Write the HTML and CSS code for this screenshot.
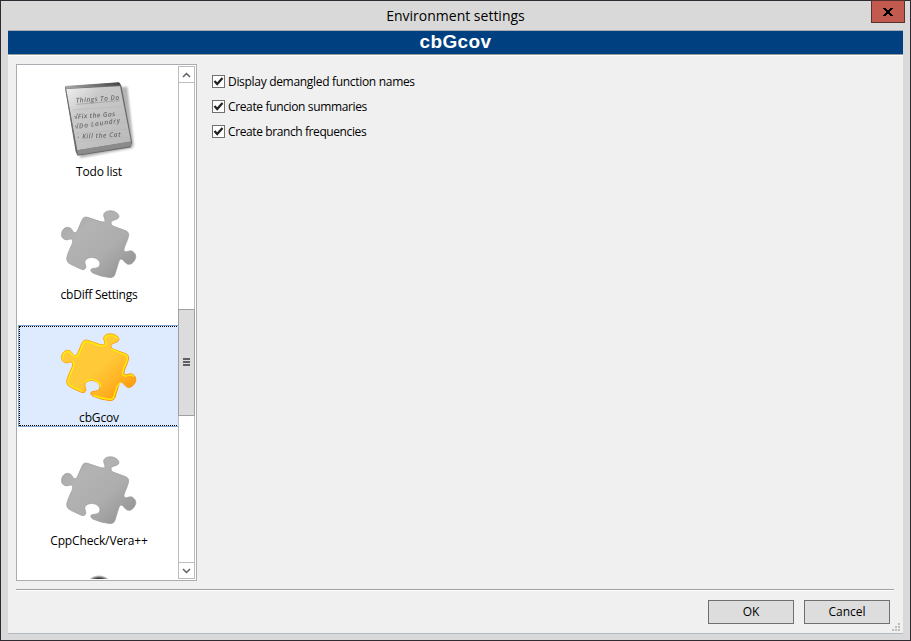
FILE: index.html
```html
<!DOCTYPE html>
<html lang="en">
<head>
<meta charset="utf-8">
<title>Environment settings</title>
<link rel="stylesheet" href="styles.css">
</head>
<body>
<svg class="defs" width="0" height="0" aria-hidden="true">
  <defs>
    <linearGradient id="gray" x1="0" y1="0" x2="1" y2="1"><stop offset="0" stop-color="#a6a6a6"/><stop offset=".3" stop-color="#b3b3b3"/><stop offset=".6" stop-color="#adadad"/><stop offset="1" stop-color="#8d8d8d"/></linearGradient>
    <linearGradient id="gold" x1="0" y1="0" x2="1" y2="1"><stop offset=".1" stop-color="#ffcb38"/><stop offset=".5" stop-color="#ffc938"/><stop offset=".7" stop-color="#ffb526"/><stop offset="1" stop-color="#ff8c00"/></linearGradient>
    <linearGradient id="edge" x1="0" y1="0" x2="1" y2="1"><stop offset="0" stop-color="#ffb01c"/><stop offset="1" stop-color="#f98f08"/></linearGradient>
    <linearGradient id="paper" x1="0" y1="0" x2="1" y2="1"><stop offset="0" stop-color="#f2f2f2"/><stop offset=".3" stop-color="#cacaca"/><stop offset="1" stop-color="#b8b8b8"/></linearGradient>
    <linearGradient id="binding" x1="0" y1="0" x2="1" y2="0"><stop offset="0" stop-color="#aaa"/><stop offset="1" stop-color="#444"/></linearGradient>
    <filter id="soft" x="-10%" y="-10%" width="120%" height="120%"><feGaussianBlur stdDeviation="3"/></filter>
    <filter id="ink"><feGaussianBlur stdDeviation="1.3"/></filter>
    <path id="piece" d="M103 52Q107 50 113 52L149 64Q162 69 165 62C166 56 158 49 162 41C168 30 187 31 196 36C207 42 210 51 203 56C195 61 184 60 183 68Q182 76 191 79L224 91Q237 95 236 106Q235 115 224 140Q219 152 225 155C234 157 239 148 249 155C260 163 259 174 253 182C246 194 234 196 227 189C221 184 219 175 211 178Q208 180 205 190L195 223Q192 233 181 233Q154 231 128 219Q120 213 123 208C128 203 143 207 148 198C153 189 147 180 137 175C126 170 110 173 106 181C101 190 110 196 107 204Q104 211 94 208L62 193Q50 187 50 177Q50 166 66 133Q71 121 65 117C58 115 53 123 43 118C34 113 32 103 37 93C42 82 54 79 62 85C69 91 68 98 76 98Q81 97 84 88L95 62Q98 54 103 52Z"/>
  </defs>
</svg>
<div class="window">
  <header class="titlebar"><span class="title">Environment settings</span>
    <button class="close" aria-label="Close"><svg width="10" height="8" viewBox="0 0 10 8" shape-rendering="crispEdges"><path d="M0 0h3v1h1v1h2V1h1V0h3v1H9v1H8v1H7v2h1v1h1v1h1v1H7V7H6V6H4v1H3v1H0V7h1V6h1V5h1V3H2V2H1V1H0z"/></svg></button>
  </header>
  <main class="client">
    <h1 class="banner">cbGcov</h1>
    <div class="body">
      <section class="list">
        <div class="items">
          <div class="item">
            <svg class="icon" viewBox="27 36 240 240">
              <path d="M54 60L232 50L251 222L248 234L91 264Z" fill="#777" opacity=".55" filter="url(#soft)"/>
              <path d="M46 51L207 39L213 47L245 217L241 231L83 256L78 244Z" fill="#747474" stroke="#555" stroke-width="2"/>
              <path d="M48 57L210 49L243 215L82 241Z" fill="url(#paper)"/>
              <path d="M45 48L207 37L213 46L48 56Z" fill="url(#binding)"/>
              <path d="M81 241L244 214L242 229L84 254Z" fill="#8b8b8b"/>
              <path d="M47 57L81 249" stroke="#686868" stroke-width="2"/>
              <g stroke="#b5b5b5" stroke-width="1.5"><path d="M65 120L217 109M70 145L223 133M74 168L227 156M78 191L232 178M82 215L236 201"/></g>
              <g class="ink" filter="url(#ink)">
                <text transform="translate(78 98) rotate(-4)" textLength="130">Things To Do</text>
                <text transform="translate(72 147) rotate(-4)" textLength="124">√Fix the Gas</text>
                <text transform="translate(75 177) rotate(-8)" textLength="137">√Do Laundry</text>
                <text transform="translate(82 207) rotate(-3)" textLength="130">- Kill the Cat</text>
              </g>
              <path d="M80 103L209 92" stroke="#999" stroke-width="2"/>
            </svg>
            <span class="label w-todo">Todo list</span>
          </div>
          <div class="item">
            <svg class="icon" viewBox="27 15 240 240"><use href="#piece" fill="url(#gray)" stroke="#999" stroke-width="2"/></svg>
            <span class="label w-diff">cbDiff Settings</span>
          </div>
          <div class="item selected">
            <svg class="icon" viewBox="27 15 240 240"><use href="#piece" fill="url(#gold)" stroke="url(#edge)" stroke-width="3"/><g fill="none" stroke="#fff200" stroke-width="3.5" stroke-linecap="round" stroke-linejoin="round"><path d="M54 177Q55 166 70 133Q75 121 68 115M40 108C35 98 44 85 54 85C65 87 66 100 76 102Q84 101 88 90L99 63Q102 54 113 56L149 68Q165 72 169 63C170 55 162 51 166 43C172 34 193 35 202 46M184 78L222 94Q233 98 232 106Q231 115 220 139Q214 155 223 159C234 161 243 151 250 160M54 177Q55 185 64 190L95 204M211 179L201 190L191 222Q189 229 181 229Q155 227 132 218M105 177C112 167 131 168 140 174Q151 180 152 190"/></g></svg>
            <span class="label w-gcov">cbGcov</span>
          </div>
          <div class="item">
            <svg class="icon" viewBox="27 15 240 240"><use href="#piece" fill="url(#gray)" stroke="#999" stroke-width="2"/></svg>
            <span class="label w-cpp">CppCheck/Vera++</span>
          </div>
          <div class="item last"><span class="orb"></span></div>
        </div>
        <div class="scrollbar">
          <span class="arrow"><svg width="9" height="6" viewBox="0 0 9 6"><path d="M1 5L4.500 1.500L8 5"/></svg></span>
          <span class="track-top"></span>
          <span class="thumb"><i></i><i></i><i></i></span>
          <span class="track-bottom"></span>
          <span class="arrow down"><svg width="9" height="6" viewBox="0 0 9 6"><path d="M1 1L4.500 4.500L8 1"/></svg></span>
        </div>
      </section>
      <section class="options">
        <label class="option"><span class="box"><svg width="11" height="11" viewBox="0 0 11 11"><path d="M1.500 5L4.200 8L9.500 2"/></svg></span><span class="o1">Display demangled function names</span></label>
        <label class="option"><span class="box"><svg width="11" height="11" viewBox="0 0 11 11"><path d="M1.500 5L4.200 8L9.500 2"/></svg></span><span class="o2">Create funcion summaries</span></label>
        <label class="option"><span class="box"><svg width="11" height="11" viewBox="0 0 11 11"><path d="M1.500 5L4.200 8L9.500 2"/></svg></span><span class="o3">Create branch frequencies</span></label>
      </section>
    </div>
    <div class="rule"></div>
    <footer class="actions"><button class="btn">OK</button><button class="btn">Cancel</button></footer>
    <svg class="grip" width="8" height="8" viewBox="0 0 8 8" fill="#bcbcbc" shape-rendering="crispEdges"><path d="M6 0h2v2h-2zM3 3h2v2h-2zM6 3h2v2h-2zM0 6h2v2h-2zM3 6h2v2h-2zM6 6h2v2h-2z"/></svg>
  </main>
</div>
</body>
</html>
```
FILE: styles.css
```css
* { box-sizing: border-box; }
body { margin: 0; overflow: hidden; font: 12px/16px "Open Sans", "Noto Sans", sans-serif; color: #000; }
.defs { position: absolute; }
.window { width: 911px; height: 641px; border: 1px solid #302b33; background: #d9d9d9; padding: 0 7px; }
.titlebar { height: 29px; display: flex; justify-content: center; position: relative; }
.title { font-size: 14px; line-height: 29px; }
.close { position: absolute; right: -2px; top: -1px; width: 34px; height: 23px; padding: 0; border: 1px solid #58322f; background: #c35a50; display: flex; align-items: center; justify-content: center; }
.client { position: relative; height: 604px; width: 895px; background: #f0f0f0; border-top: 1px solid #a9adb4; border-bottom: 1px solid #b3bac3; }
.banner { margin: 0; height: 24px; background: #004080; color: #fff; border-bottom: 1px solid #999; box-shadow: 0 1px #fff; text-align: center; font: bold 19px/22px "Liberation Sans", Arial, sans-serif; letter-spacing: .35px; }
.body { display: flex; padding: 9px 8px 0; }
.list { width: 181px; height: 517px; border: 1px solid #abadb3; background: #fff; display: flex; padding: 1px; }
.items { width: 160px; height: 513px; overflow: hidden; padding-top: 13px; }
.item { height: 102px; margin-bottom: 21px; width: 162px; padding-top: 3px; display: flex; flex-direction: column; align-items: center; }
.icon { width: 80px; height: 80px; flex: none; display: block; overflow: hidden; }
.label { margin-top: 2px; white-space: nowrap; }
.w-todo { letter-spacing: -.2px; }
.w-diff { letter-spacing: -.25px; }
.w-gcov { letter-spacing: -.15px; }
.w-cpp { letter-spacing: -.13px; }
.selected { position: relative; background: #deebff; border: 1px solid #7da2ce; padding-top: 2px; }
.selected::after { content: ""; position: absolute; inset: 0; border: 1px dotted #000; }
.ink { font: italic 600 20px "Open Sans", sans-serif; fill: #6c6c6c; }
.last { padding-top: 0; margin: 0; }
.orb { width: 30px; height: 30px; margin-top: 4px; border-radius: 50%; background: radial-gradient(closest-side, #000 70%, #777 85%, #fff 100%); }
.scrollbar { width: 17px; height: 513px; display: flex; flex-direction: column; border: 1px solid #bcbcbc; }
.arrow { height: 16px; border-bottom: 1px solid #bcbcbc; display: flex; align-items: center; justify-content: center; }
.arrow.down { border-bottom: 0; border-top: 1px solid #bcbcbc; }
.arrow path { fill: none; stroke: #606060; stroke-width: 1.5; }
.track-top { height: 226px; }
.thumb { height: 107px; margin: 0 -1px; padding-bottom: 1px; background: #dcdcdc; border: 1px solid #a0a0a0; display: flex; flex-direction: column; justify-content: center; align-items: center; gap: 1px; }
.thumb i { width: 7px; height: 2px; background: #606060; }
.track-bottom { flex: 1; }
.options { padding: 10px 0 0 15px; }
.option { display: flex; align-items: center; gap: 3px; height: 16px; margin-bottom: 9px; white-space: nowrap; }
.o1 { letter-spacing: -.31px; }
.o2 { letter-spacing: -.36px; }
.o3 { letter-spacing: -.4px; }
.box { width: 13px; height: 13px; margin-bottom: 1px; border: 1px solid #707070; background: #fff; display: flex; }
.box path { fill: none; stroke: #212121; stroke-width: 2.2; }
.rule { width: 878px; height: 2px; margin: 8px 0 0 8px; border-top: 1px solid #a0a0a0; background: #fff; }
.actions { display: flex; justify-content: flex-end; gap: 10px; padding: 9px 13px 0 0; }
.btn { width: 86px; height: 24px; padding: 0; border: 1px solid #707070; background: #ddd; font: inherit; color: #000; }
.grip { position: absolute; right: 3px; bottom: 2px; }
```
